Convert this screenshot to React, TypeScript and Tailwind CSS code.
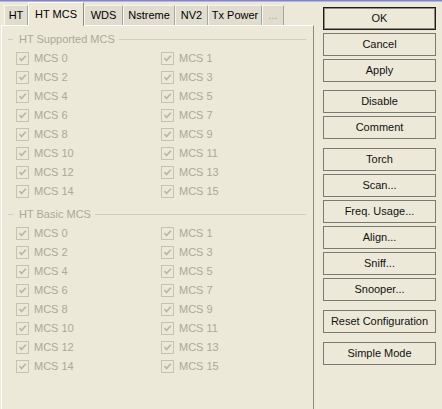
import React from "react";

const FONT = { fontFamily: '"Liberation Sans", Arial, sans-serif' };

const tabs = [
  { label: "HT", w: "w-[24px]" },
  { label: "HT MCS", w: "w-[56px]", active: true },
  { label: "WDS", w: "w-[39px]" },
  { label: "Nstreme", w: "w-[52px]" },
  { label: "NV2", w: "w-[33px]" },
  { label: "Tx Power", w: "w-[54px]" },
  { label: "...", w: "w-[22px]", dim: true },
];

// grey (disabled) checkbox
const Check = ({ label }: { label: string }) => (
  <div className="flex items-center h-[19px]">
    <div className="w-[13px] h-[13px] border border-[#c5c2b2] bg-[#ece9d8] flex items-center justify-center">
      <svg width="11" height="11" viewBox="0 0 11 11">
        <polyline points="2.5,5 4.5,7.5 8.8,2.8" fill="none" stroke="#b9b6a6" strokeWidth="1.7" />
      </svg>
    </div>
    <span className="ml-[5px] text-[11px] text-[#aca899]">{label}</span>
  </div>
);

const Group = ({ title }: { title: string }) => {
  const left = [0, 2, 4, 6, 8, 10, 12, 14];
  return (
    <div>
      <div className="flex items-center h-[14px] pr-[7px]">
        <div className="ml-[6px] w-[5px] h-px bg-[#d0cdbf]" />
        <span className="ml-[6px] text-[11px] text-[#aca899]">{title}</span>
        <div className="ml-[4px] flex-1 h-px bg-[#d0cdbf]" />
      </div>
      <div className="mt-[3px] pl-[14px]">
        {left.map((n) => (
          <div key={n} className="flex">
            <div className="w-[145px]">
              <Check label={`MCS ${n}`} />
            </div>
            <Check label={`MCS ${n + 1}`} />
          </div>
        ))}
      </div>
    </div>
  );
};

const Btn = ({ label, def, mt }: { label: string; def?: boolean; mt: string }) => (
  <div
    className={`${mt} h-[23px] w-[113px] flex items-center justify-center text-[11px] text-[#111] bg-[#ece9d8] border ${
      def ? "border-[#1c1c1c] shadow-[inset_0_0_0_1px_#8f8d82]" : "border-[#7b7a72]"
    }`}
  >
    {label}
  </div>
);

export default function App() {
  return (
    <div className="w-[442px] h-[409px] bg-[#ece9d8] overflow-hidden flex flex-col" style={FONT}>
      <div className="h-px bg-[#7f86c4]" />
      <div className="h-px bg-[#b4b6d8]" />
      <div className="flex flex-1">
        {/* left: tabs + panel */}
        <div className="w-[314px] flex flex-col">
          <div className="flex items-end h-[23px] pl-[4px]">
            {tabs.map((t) =>
              t.active ? (
                <div
                  key={t.label}
                  className={`${t.w} h-[24px] -mb-px z-10 bg-[#ece9d8] border-t border-l border-white border-r-[#8e8c82] border-r flex items-center justify-center text-[11px] text-black`}
                >
                  {t.label}
                </div>
              ) : (
                <div
                  key={t.label}
                  className={`${t.w} h-[20px] bg-[#e0ddcf] border-t border-l border-[#f6f5ef] border-r border-r-[#a9a79c] flex items-center justify-center text-[11px] ${
                    t.dim ? "text-[#aca899]" : "text-black"
                  }`}
                >
                  {t.label}
                </div>
              )
            )}
          </div>
          <div className="flex-1 ml-[1px] border-t border-l border-white border-r border-r-[#8e8c82] pt-[6px]">
            <Group title="HT Supported MCS" />
            <div className="mt-[6px]">
              <Group title="HT Basic MCS" />
            </div>
          </div>
        </div>
        {/* right: buttons */}
        <div className="flex flex-col pl-[9px]">
          <Btn label="OK" def mt="mt-[5px]" />
          <Btn label="Cancel" mt="mt-[3px]" />
          <Btn label="Apply" mt="mt-[3px]" />
          <Btn label="Disable" mt="mt-[8px]" />
          <Btn label="Comment" mt="mt-[3px]" />
          <Btn label="Torch" mt="mt-[9px]" />
          <Btn label="Scan..." mt="mt-[3px]" />
          <Btn label="Freq. Usage..." mt="mt-[3px]" />
          <Btn label="Align..." mt="mt-[3px]" />
          <Btn label="Sniff..." mt="mt-[3px]" />
          <Btn label="Snooper..." mt="mt-[3px]" />
          <Btn label="Reset Configuration" mt="mt-[9px]" />
          <Btn label="Simple Mode" mt="mt-[9px]" />
        </div>
      </div>
    </div>
  );
}
